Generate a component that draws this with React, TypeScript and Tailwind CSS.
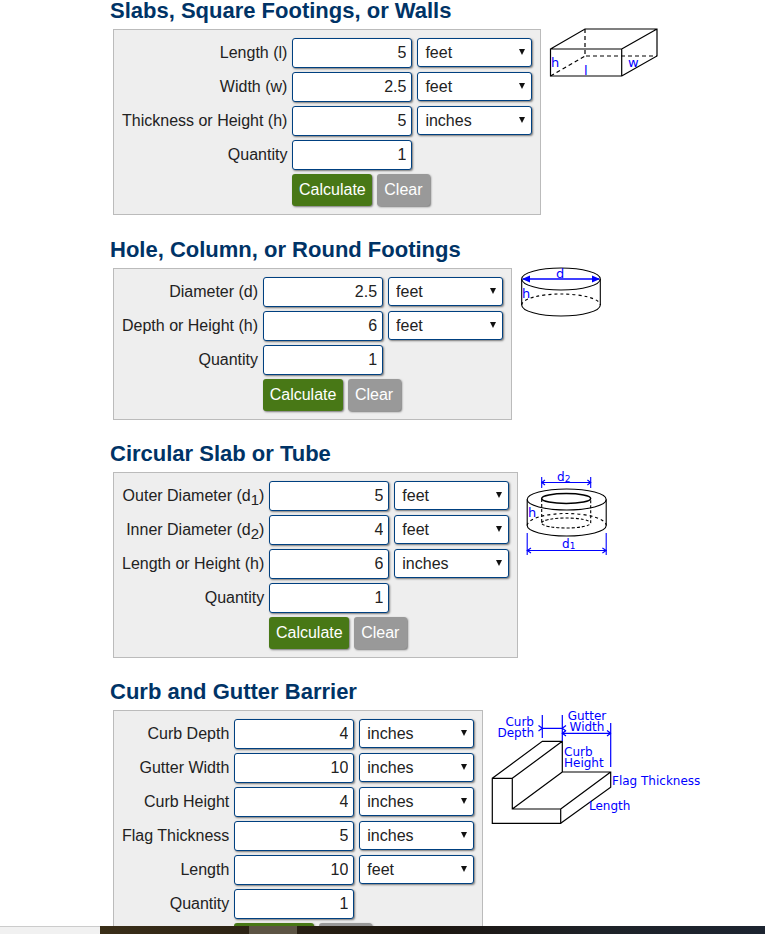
import React from "react";

type Row = { label: React.ReactNode; value: string; unit?: string };

const UNITS = ["inches", "feet", "yards", "cm", "meters"];

function Calc({ rows }: { rows: Row[] }) {
  return (
    <div className="grid grid-cols-[max-content_120px_120px] gap-y-[4px] border border-[#bbbbbb] bg-[#eeeeee] pt-[8px] pr-[8px] pb-[8px] pl-[8px]">
      {rows.map((r, i) => (
        <React.Fragment key={i}>
          <div className="pr-[5px] text-right text-[16px] leading-[30px] text-[#222222]">{r.label}</div>
          <input
            defaultValue={r.value}
            className="h-[30px] w-[120px] rounded-[3px] border border-[#004080] bg-white pr-[5px] text-right text-[16px] text-[#222222] shadow-[1px_1px_2px_#777777]"
          />
          {r.unit ? (
            <div className="relative ml-[5px] h-[29px] w-[115px]">
              <select
                defaultValue={r.unit}
                className="h-[29px] w-[115px] appearance-none rounded-[3px] border border-[#004080] bg-white pl-[7px] text-[16px] text-[#222222] shadow-[1px_1px_2px_#777777]"
              >
                {UNITS.map((u) => (
                  <option key={u}>{u}</option>
                ))}
              </select>
              <svg className="absolute top-[11px] right-[7px]" width="6" height="6" viewBox="0 0 6 6">
                <path d="M0 0H6L3 6Z" fill="#111111" />
              </svg>
            </div>
          ) : (
            <div />
          )}
        </React.Fragment>
      ))}
      <div />
      <div className="col-span-2 flex gap-[5px]">
        <button className="h-[32px] w-[80px] rounded-[3px] bg-[#487816] text-[16px] text-white shadow-[1px_1px_2px_#777777]">
          Calculate
        </button>
        <button className="h-[32px] w-[53px] rounded-[3px] bg-[#999999] pr-[1px] text-[16px] text-white shadow-[1px_1px_2px_#777777]">
          Clear
        </button>
      </div>
    </div>
  );
}

function Section({ title, rows, first, children }: { title: string; rows: Row[]; first?: boolean; children: React.ReactNode }) {
  return (
    <section className={first ? "-mt-[2px] pb-[1px]" : "mt-[21px]"}>
      <h2 className="mb-[5px] text-[22px] leading-[26px] font-bold text-[#003366]">{title}</h2>
      <div className="ml-[3px] flex items-start">
        <Calc rows={rows} />
        {children}
      </div>
    </section>
  );
}

const blue = "#0000ff";
const lbl = "fill-[#0000ff] stroke-none font-['DejaVu_Sans',sans-serif] text-[13px]";
const cap = "fill-[#0000ff] stroke-none font-['DejaVu_Sans',sans-serif] text-[12px]";

function BoxDiagram() {
  return (
    <svg className="ml-[8px] overflow-visible" width="110" height="50" viewBox="549 29 110 50" fill="none" stroke="#000" strokeWidth="1.2">
      <path d="M550.5 49H621.7V76H550.5ZM550.5 49L585 29H657V56L621.7 76M621.7 49L657 29" />
      <path d="M585 29V56H657M550.5 76L585 56" strokeDasharray="4 3" />
      <text x="551" y="67" className={lbl}>h</text>
      <text x="584" y="75" className={lbl}>l</text>
      <text x="628" y="67" className={lbl}>w</text>
    </svg>
  );
}

function CylinderDiagram() {
  return (
    <svg className="ml-[9px] overflow-visible" width="82" height="50" viewBox="521 268 82 50" fill="none" stroke="#000" strokeWidth="1.1">
      <ellipse cx="561" cy="279" rx="39.3" ry="11" />
      <path d="M521.7 279V305A39.3 11 0 0 0 600.3 305V279" />
      <path d="M521.7 305A39.3 11 0 0 1 600.3 305" strokeDasharray="3 3" />
      <path d="M523 279H599" stroke={blue} strokeWidth="1.4" />
      <path d="M522 279L530 275.5V282.5ZM600 279L592 275.5V282.5Z" fill={blue} stroke="none" />
      <text x="556" y="278" className={lbl}>d</text>
      <text x="522" y="298" className={lbl}>h</text>
    </svg>
  );
}

function TubeDiagram() {
  return (
    <svg className="ml-[8px] overflow-visible" width="82" height="84" viewBox="526 472 82 84" fill="none" stroke="#000" strokeWidth="1.1">
      <ellipse cx="566.7" cy="499.5" rx="39.5" ry="10.5" />
      <ellipse cx="566.2" cy="498.5" rx="24.5" ry="5" strokeWidth="1.5" />
      <path d="M527.2 499.5V525.5A39.5 10.5 0 0 0 606.2 525.5V499.5" />
      <path d="M527.2 525.5A39.5 12 0 0 1 606.2 525.5" strokeDasharray="3 3" />
      <path d="M541.7 499V523A24.5 5 0 0 0 590.7 523V499M541.7 523A24.5 5 0 0 1 590.7 523" strokeDasharray="3 2" />
      <g stroke={blue}>
        <path d="M541.7 477V488M590.7 477V488M541.7 482.5H590.7" />
        <path d="M545 480L541.7 482.5L545 485M587.4 480L590.7 482.5L587.4 485" />
        <path d="M527.2 533V555M606.2 533V555M527.2 550.5H606.2" />
        <path d="M531 548L527.2 550.5L531 553M602.4 548L606.2 550.5L602.4 553" />
      </g>
      <text x="557" y="481" className={cap}>d<tspan className="text-[9px]" dy="1">2</tspan></text>
      <text x="562" y="548" className={cap}>d<tspan className="text-[9px]" dy="1">1</tspan></text>
      <text x="528" y="517" className={lbl}>h</text>
    </svg>
  );
}

function CurbDiagram() {
  return (
    <svg className="ml-[8px] overflow-visible" width="210" height="120" viewBox="491 710 210 120" fill="none" stroke="#000" strokeWidth="1.2">
      <path d="M492.3 778.3H512.3V809H560.7V823.3H492.3ZM492.3 778.3L542.3 741.3H562.3V772H610.7V787.3L560.7 823.3M512.3 778.3L562.3 741.3M512.3 809L562.3 772M560.7 809L610.7 772" />
      <g stroke={blue}>
        <path d="M542.3 715V738M562.3 715V741M542.3 728.3H562.3M538.5 725.5L542.3 728.3L538.5 731M566 725.5L562.3 728.3L566 731" />
        <path d="M562.3 733.3H610.7M566 730.5L562.3 733.3L566 736M607 730.5L610.7 733.3L607 736M610.7 723V767" />
      </g>
      <text x="534" y="726" textAnchor="end" className={cap}>Curb</text>
      <text x="534" y="737" textAnchor="end" className={cap}>Depth</text>
      <text x="587" y="720" textAnchor="middle" className={cap}>Gutter</text>
      <text x="587" y="731" textAnchor="middle" className={cap}>Width</text>
      <text x="564" y="756" className={cap}>Curb</text>
      <text x="564" y="767" className={cap}>Height</text>
      <text x="612" y="785" className={cap}>Flag Thickness</text>
      <text x="589" y="810" className={cap}>Length</text>
    </svg>
  );
}

const Sub = ({ n }: { n: string }) => <sub className="text-[15px] leading-none">{n}</sub>;

export default function App() {
  return (
    <div className="relative h-[934px] overflow-hidden bg-white font-['Liberation_Sans',Arial,sans-serif]">
      <div className="pl-[110px]">
        <Section
          first
          title="Slabs, Square Footings, or Walls"
          rows={[
            { label: "Length (l)", value: "5", unit: "feet" },
            { label: "Width (w)", value: "2.5", unit: "feet" },
            { label: "Thickness or Height (h)", value: "5", unit: "inches" },
            { label: "Quantity", value: "1" },
          ]}
        >
          <BoxDiagram />
        </Section>
        <Section
          title="Hole, Column, or Round Footings"
          rows={[
            { label: "Diameter (d)", value: "2.5", unit: "feet" },
            { label: "Depth or Height (h)", value: "6", unit: "feet" },
            { label: "Quantity", value: "1" },
          ]}
        >
          <CylinderDiagram />
        </Section>
        <Section
          title="Circular Slab or Tube"
          rows={[
            { label: <>Outer Diameter (d<Sub n="1" />)</>, value: "5", unit: "feet" },
            { label: <>Inner Diameter (d<Sub n="2" />)</>, value: "4", unit: "feet" },
            { label: "Length or Height (h)", value: "6", unit: "inches" },
            { label: "Quantity", value: "1" },
          ]}
        >
          <TubeDiagram />
        </Section>
        <Section
          title="Curb and Gutter Barrier"
          rows={[
            { label: "Curb Depth", value: "4", unit: "inches" },
            { label: "Gutter Width", value: "10", unit: "inches" },
            { label: "Curb Height", value: "4", unit: "inches" },
            { label: "Flag Thickness", value: "5", unit: "inches" },
            { label: "Length", value: "10", unit: "feet" },
            { label: "Quantity", value: "1" },
          ]}
        >
          <CurbDiagram />
        </Section>
      </div>

      {/* docked strip over the page bottom */}
      <div className="absolute inset-x-0 bottom-0 flex h-[8px]">
        <div className="w-[100px] border-t border-[#cccccc] bg-[#f1f1f1]" />
        <div className="flex flex-1 bg-[linear-gradient(90deg,#3a2e18_0%,#2a2114_25%,#1c1610_50%,#1e2228_75%,#1c2430_100%)]">
          <div className="ml-[149px] w-[48px] bg-[#5c5444]" />
        </div>
      </div>
    </div>
  );
}
